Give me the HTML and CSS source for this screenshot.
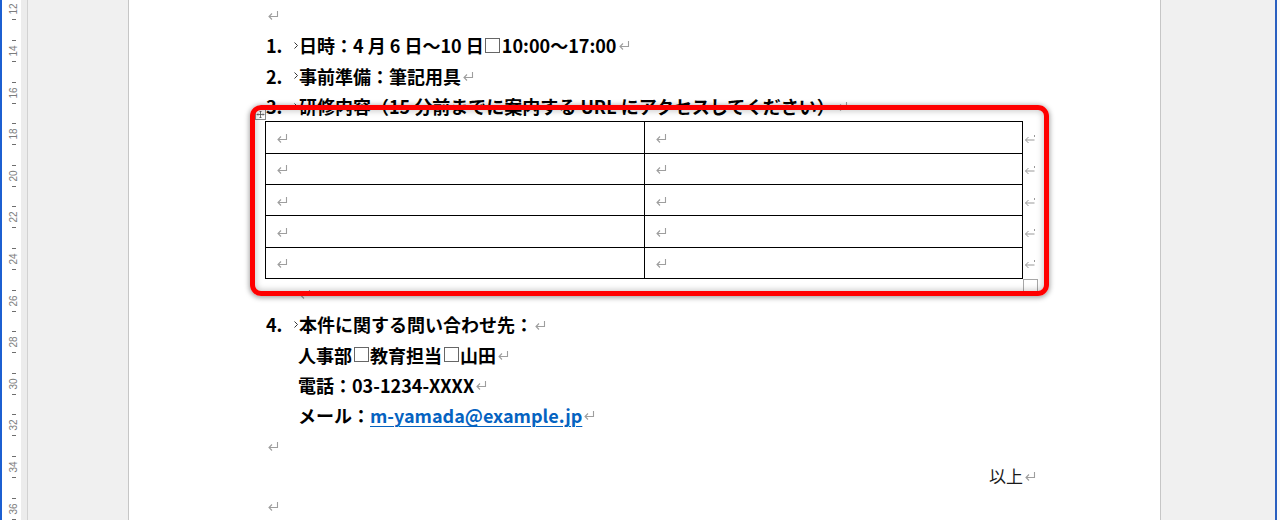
FILE: index.html
```html
<!DOCTYPE html>
<html lang="ja">
<head>
<meta charset="utf-8">
<title>Document</title>
<link rel="stylesheet" href="styles.css">
</head>
<body>
<svg class="defs" width="0" height="0">
  <defs>
    <symbol id="pmark" viewBox="0 0 12 11">
      <path d="M10.5 1 V6.5 H2 M5 3.5 L2 6.5 L5 9.5" fill="none" stroke="#9e9e9e" stroke-width="1.1"/>
    </symbol>
    <symbol id="tabmark" viewBox="0 0 4 7">
      <path d="M0.5 0.5 L3.5 3.5 L0.5 6.5" fill="none" stroke="#333" stroke-width="1"/>
    </symbol>
    <symbol id="rowmark" viewBox="0 0 12 12">
      <path d="M10.5 7 H1.5 M4.5 4 L1.5 7 L4.5 10 M10.5 2 V4" fill="none" stroke="#999" stroke-width="1"/>
    </symbol>
  </defs>
</svg>
<div class="app">
  <div class="ruler">
    <div class="ruler-edge"></div>
    <div class="ruler-scale">
      <div class="unit first"><i class="tick"></i><span class="rn">12</span><i class="tick"></i></div>
      <div class="unit"><i class="tick"></i><span class="rn">14</span><i class="tick"></i></div>
      <div class="unit"><i class="tick"></i><span class="rn">16</span><i class="tick"></i></div>
      <div class="unit"><i class="tick"></i><span class="rn">18</span><i class="tick"></i></div>
      <div class="unit"><i class="tick"></i><span class="rn">20</span><i class="tick"></i></div>
      <div class="unit"><i class="tick"></i><span class="rn">22</span><i class="tick"></i></div>
      <div class="unit"><i class="tick"></i><span class="rn">24</span><i class="tick"></i></div>
      <div class="unit"><i class="tick"></i><span class="rn">26</span><i class="tick"></i></div>
      <div class="unit"><i class="tick"></i><span class="rn">28</span><i class="tick"></i></div>
      <div class="unit"><i class="tick"></i><span class="rn">30</span><i class="tick"></i></div>
      <div class="unit"><i class="tick"></i><span class="rn">32</span><i class="tick"></i></div>
      <div class="unit"><i class="tick"></i><span class="rn">34</span><i class="tick"></i></div>
      <div class="unit"><i class="tick"></i><span class="rn">36</span><i class="tick"></i></div>
    </div>
    <div class="ruler-shade"></div>
  </div>
  <div class="desk-left"></div>
  <div class="page">
    <div class="doc">
      <p class="line"><svg class="pm"><use href="#pmark"/></svg></p>
      <p class="line item"><span class="num">1.</span><svg class="tab"><use href="#tabmark"/></svg>日時：4 月 6 日～10 日<span class="sp"></span>10:00～17:00<svg class="pm"><use href="#pmark"/></svg></p>
      <p class="line item"><span class="num">2.</span><svg class="tab"><use href="#tabmark"/></svg>事前準備：筆記用具<svg class="pm"><use href="#pmark"/></svg></p>
      <p class="line item"><span class="num">3.</span><svg class="tab"><use href="#tabmark"/></svg>研修内容（15 分前までに案内する URL にアクセスしてください）<svg class="pm"><use href="#pmark"/></svg></p>
      <div class="table-wrap">
        <div class="move-handle"><svg width="9" height="9" viewBox="0 0 9 9"><path d="M4.5 1 V8 M1 4.5 H8 M3.5 2 L4.5 1 L5.5 2 M3.5 7 L4.5 8 L5.5 7 M2 3.5 L1 4.5 L2 5.5 M7 3.5 L8 4.5 L7 5.5" fill="none" stroke="#555" stroke-width="0.8"/></svg></div>
        <div class="grid">
          <div class="cell"><svg class="pm"><use href="#pmark"/></svg></div><div class="cell"><svg class="pm"><use href="#pmark"/></svg></div>
          <div class="cell"><svg class="pm"><use href="#pmark"/></svg></div><div class="cell"><svg class="pm"><use href="#pmark"/></svg></div>
          <div class="cell"><svg class="pm"><use href="#pmark"/></svg></div><div class="cell"><svg class="pm"><use href="#pmark"/></svg></div>
          <div class="cell"><svg class="pm"><use href="#pmark"/></svg></div><div class="cell"><svg class="pm"><use href="#pmark"/></svg></div>
          <div class="cell"><svg class="pm"><use href="#pmark"/></svg></div><div class="cell"><svg class="pm"><use href="#pmark"/></svg></div>
        </div>
        <div class="row-ends">
          <div class="row-end"><svg class="rm"><use href="#rowmark"/></svg></div>
          <div class="row-end"><svg class="rm"><use href="#rowmark"/></svg></div>
          <div class="row-end"><svg class="rm"><use href="#rowmark"/></svg></div>
          <div class="row-end"><svg class="rm"><use href="#rowmark"/></svg></div>
          <div class="row-end"><svg class="rm"><use href="#rowmark"/></svg></div>
        </div>
        <div class="resize-handle"></div>
      </div>
      <p class="line indent"><svg class="pm"><use href="#pmark"/></svg></p>
      <p class="line item"><span class="num">4.</span><svg class="tab"><use href="#tabmark"/></svg>本件に関する問い合わせ先：<svg class="pm"><use href="#pmark"/></svg></p>
      <p class="line indent">人事部<span class="sp"></span>教育担当<span class="sp"></span>山田<svg class="pm"><use href="#pmark"/></svg></p>
      <p class="line indent">電話：03-1234-XXXX<svg class="pm"><use href="#pmark"/></svg></p>
      <p class="line indent">メール：<a class="link" href="#">m-yamada@example.jp</a><svg class="pm"><use href="#pmark"/></svg></p>
      <p class="line"><svg class="pm"><use href="#pmark"/></svg></p>
      <p class="line right">以上<svg class="pm pm-end"><use href="#pmark"/></svg></p>
      <p class="line"><svg class="pm"><use href="#pmark"/></svg></p>
    </div>
    <div class="callout"></div>
  </div>
  <div class="desk-right"></div>
  <div class="edge-right"></div>
</div>
</body>
</html>
```

FILE: styles.css
```css
html, body {
  margin: 0;
  padding: 0;
}
body {
  width: 1280px;
  height: 520px;
  overflow: hidden;
  background: #f0f0f0;
}
.defs {
  position: absolute;
  width: 0;
  height: 0;
}
.app {
  display: flex;
  height: 520px;
  background: #f0f0f0;
  overflow: hidden;
}

/* ruler */
.ruler {
  display: flex;
  width: 28px;
  flex: none;
  height: 520px;
}
.ruler-edge {
  width: 1.5px;
  background: #1c5fd1;
}
.ruler-scale {
  width: 19.5px;
  background: #ffffff;
  display: flex;
  flex-direction: column;
  align-items: center;
  padding-left: 5px;
  box-sizing: border-box;
  overflow: hidden;
}
.unit {
  flex: none;
  height: 41.6px;
  width: 12px;
  display: flex;
  flex-direction: column;
  align-items: center;
  padding-top: 10px;
  box-sizing: border-box;
}
.unit.first {
  margin-top: -11.6px;
}
.tick {
  display: block;
  width: 4px;
  height: 1px;
  background: #6e6e6e;
}
.rn {
  display: flex;
  align-items: center;
  justify-content: center;
  height: 20px;
  font-family: "Liberation Sans", Arial, sans-serif;
  font-size: 10px;
  color: #7c7c7c;
  transform: rotate(-90deg);
  line-height: 1;
}
.ruler-shade {
  width: 6px;
  background: #ececec;
  border-right: 1px solid #d2d2d2;
}

.desk-left {
  width: 100px;
  flex: none;
  background: #f0f0f0;
}
.desk-right {
  width: 114px;
  flex: none;
  background: #f0f0f0;
}
.edge-right {
  width: 2px;
  flex: none;
  background: #2a5fbf;
  border-right: 3px solid #fafafa;
}

/* page */
.page {
  position: relative;
  width: 1033px;
  flex: none;
  box-sizing: border-box;
  background: #ffffff;
  border-left: 1px solid #c6c6c6;
  border-right: 1px solid #c6c6c6;
}
.doc {
  padding: 0 137px;
  font-family: "Noto Sans CJK JP", "Noto Sans", sans-serif;
  font-size: 18px;
  font-weight: 700;
  color: #000;
}
.line {
  margin: 0;
  height: 30.3px;
  line-height: 30.3px;
  white-space: nowrap;
  display: flex;
  align-items: center;
}
.indent {
  padding-left: 32px;
}
.right {
  justify-content: flex-end;
  font-weight: 400;
  font-size: 17px;
  color: #1a1a1a;
}
.num {
  display: inline-block;
  width: 28px;
}
.tab {
  flex: none;
  width: 4px;
  height: 7px;
  margin-right: 1px;
}
.pm {
  flex: none;
  width: 12px;
  height: 11px;
  margin-left: 1px;
  margin-top: 1px;
}
.pm-end {
  margin-right: -13px;
}
.sp {
  display: inline-block;
  width: 15px;
  height: 15px;
  box-sizing: border-box;
  border: 1px solid #666;
  margin: 0 1.5px;
}
.link {
  color: #0563c1;
  text-decoration: underline;
  text-underline-offset: 3px;
  text-decoration-thickness: 1px;
}

/* table */
.table-wrap {
  position: relative;
  display: flex;
  margin-left: -1px;
}
.grid {
  display: grid;
  grid-template-columns: 379px 378px;
  grid-auto-rows: 31.4px;
  border-top: 1px solid #000;
  border-left: 1px solid #000;
}
.cell {
  box-sizing: border-box;
  border-right: 1px solid #000;
  border-bottom: 1px solid #000;
  display: flex;
  align-items: center;
  padding-left: 9px;
  padding-top: 1px;
}
.row-ends {
  display: grid;
  grid-auto-rows: 31.4px;
  padding-top: 1px;
}
.row-end {
  display: flex;
  align-items: center;
  padding-left: 1px;
  padding-top: 2px;
}
.rm {
  width: 12px;
  height: 12px;
}
.move-handle {
  position: absolute;
  left: -10px;
  top: -12px;
  width: 9px;
  height: 9px;
  border: 1px solid #8a8a8a;
  background: #fff;
  display: flex;
}
.resize-handle {
  position: absolute;
  left: 758px;
  top: 158px;
  width: 13px;
  height: 13px;
  border: 1px solid #a8a8a8;
  background: #fff;
}

/* highlight callout */
.callout {
  position: absolute;
  left: 121px;
  top: 105px;
  width: 799px;
  height: 191px;
  box-sizing: border-box;
  border: 5.5px solid #ff0000;
  border-radius: 11px;
  box-shadow: 0 1px 5px 1px rgba(0, 0, 0, 0.35), inset 0 0 6px 1px rgba(0, 0, 0, 0.22);
  pointer-events: none;
}
```
